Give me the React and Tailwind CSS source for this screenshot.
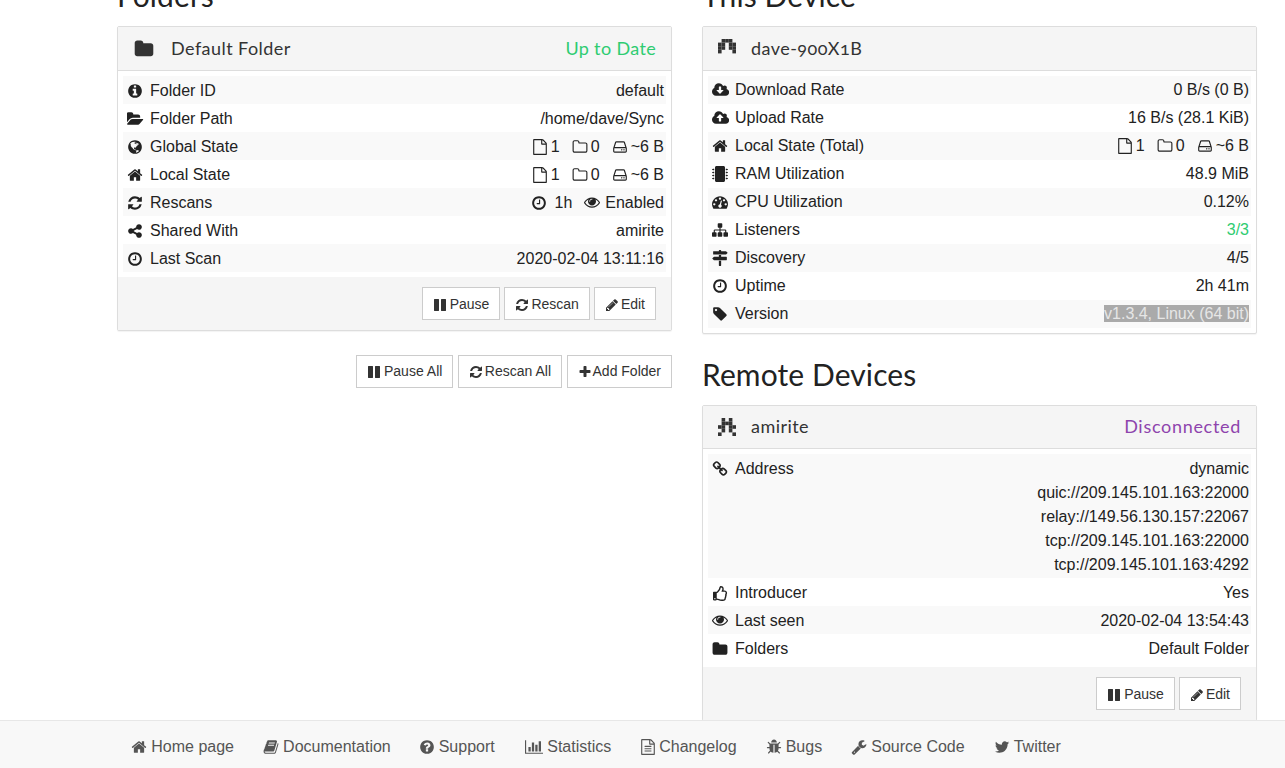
import React from "react";
import { FaRegThumbsUp, FaMicrochip } from "react-icons/fa";

const P = {
  home: "M1472 992v480q0 26-19 45t-45 19h-384v-384h-256v384h-384q-26 0-45-19t-19-45v-480q0-1 .5-3t.5-3l575-474 575 474q1 2 1 6zm223-69l-62 74q-8 9-21 11h-3q-13 0-21-7l-692-577-692 577q-12 8-24 7-13-2-21-11l-62-74q-8-10-7-23.500t11-21.500l719-599q32-26 76-26t76 26l244 204v-195q0-14 9-23t23-9h192q14 0 23 9t9 23v408l219 182q10 8 11 21.500t-7 23.500z",
  refresh: "M1639 1056q0 5-1 7-64 268-268 434.500t-478 166.500q-146 0-282.500-55t-243.500-157l-129 129q-19 19-45 19t-45-19-19-45v-448q0-26 19-45t45-19h448q26 0 45 19t19 45-19 45l-137 137q71 66 161 102t187 36q134 0 250-65t186-179q11-17 53-117 8-23 30-23h192q13 0 22.500 9.500t9.500 22.500zm25-800v448q0 26-19 45t-45 19h-448q-26 0-45-19t-19-45 19-45l138-138q-148-137-349-137-134 0-250 65t-186 179q-11 17-53 117-8 23-30 23h-199q-13 0-22.500-9.500t-9.500-22.500v-7q65-268 270-434.500t480-166.500q146 0 284 55.500t245 156.500l130-129q19-19 45-19t45 19 19 45z",
  clock: "M1024 544v448q0 14-9 23t-23 9h-320q-14 0-23-9t-9-23v-64q0-14 9-23t23-9h224v-352q0-14 9-23t23-9h64q14 0 23 9t9 23zm416 352q0-148-73-273t-198-198-273-73-273 73-198 198-73 273 73 273 198 198 273 73 273-73 198-198 73-273zm224 0q0 209-103 385.500t-279.500 279.500-385.500 103-385.500-103-279.500-279.500-103-385.500 103-385.500 279.500-279.500 385.500-103 385.500 103 279.500 279.500 103 385.500z",
  pencil: "M491 1536l91-91-235-235-91 91v107h128v128h107zm523-928q0-22-22-22-10 0-17 7l-542 542q-7 7-7 17 0 22 22 22 10 0 17-7l542-542q7-7 7-17zm-54-192l416 416-832 832h-416v-416zm683 96q0 53-37 90l-166 166-416-416 166-165q36-38 90-38 53 0 91 38l235 234q37 39 37 91z",
  dash: "M384 1152q0-53-37.500-90.500t-90.500-37.500-90.500 37.500-37.500 90.500 37.500 90.500 90.500 37.500 90.500-37.500 37.500-90.500zm192-448q0-53-37.500-90.500t-90.500-37.500-90.500 37.500-37.500 90.500 37.500 90.500 90.500 37.500 90.500-37.500 37.500-90.500zm428 481l101-382q6-26-7.500-48.500t-38.500-29.500-48 6.500-30 39.500l-101 382q-60 5-107 43.500t-63 98.500q-20 77 20 146t117 89 146-20 89-117q16-60-6-117t-72-91zm660-33q0-53-37.500-90.500t-90.500-37.500-90.500 37.500-37.500 90.500 37.500 90.500 90.500 37.500 90.500-37.500 37.500-90.500zm-640-640q0-53-37.500-90.500t-90.500-37.500-90.500 37.500-37.500 90.500 37.500 90.500 90.500 37.500 90.500-37.500 37.500-90.500zm448 192q0-53-37.500-90.500t-90.500-37.500-90.500 37.500-37.500 90.500 37.500 90.500 90.500 37.500 90.500-37.500 37.500-90.500zm320 448q0 261-141 483-19 29-54 29h-1402q-35 0-54-29-141-221-141-483 0-182 71-348t191-286 286-191 348-71 348 71 286 191 191 286 71 348z",
  folder: "M1728 608v704q0 92-66 158t-158 66h-1216q-92 0-158-66t-66-158v-960q0-92 66-158t158-66h320q92 0 158 66t66 158v32h672q92 0 158 66t66 158z",
  folderO: "M1600 1312v-704q0-40-28-68t-68-28h-704q-40 0-68-28t-28-68v-64q0-40-28-68t-68-28h-320q-40 0-68 28t-28 68v960q0 40 28 68t68 28h1216q40 0 68-28t28-68zm128-704v704q0 92-66 158t-158 66h-1216q-92 0-158-66t-66-158v-960q0-92 66-158t158-66h320q92 0 158 66t66 158v32h672q92 0 158 66t66 158z",
  fileO: "M1596 380q28 28 48 76t20 88v1152q0 40-28 68t-68 28h-1344q-40 0-68-28t-28-68v-1600q0-40 28-68t68-28h896q40 0 88 20t76 48zm-444-244v376h376q-10-29-22-41l-313-313q-12-12-41-22zm384 1528v-1024h-416q-40 0-68-28t-28-68v-416h-768v1536h1280z",
  info: "M1152 1376v-160q0-14-9-23t-23-9h-96v-512q0-14-9-23t-23-9h-320q-14 0-23 9t-9 23v160q0 14 9 23t23 9h96v320h-96q-14 0-23 9t-9 23v160q0 14 9 23t23 9h448q14 0 23-9t9-23zm-128-896v-160q0-14-9-23t-23-9h-192q-14 0-23 9t-9 23v160q0 14 9 23t23 9h192q14 0 23-9t9-23zm640 416q0 209-103 385.500t-279.500 279.500-385.500 103-385.500-103-279.500-279.500-103-385.500 103-385.500 279.500-279.500 385.500-103 385.500 103 279.500 279.500 103 385.500z",
  question: "M1024 1376v-192q0-14-9-23t-23-9h-192q-14 0-23 9t-9 23v192q0 14 9 23t23 9h192q14 0 23-9t9-23zm256-672q0-88-55.500-163t-138.500-116-170-41q-243 0-371 213-15 24 8 42l132 100q7 6 19 6 16 0 25-12 53-68 86-92 34-24 86-24 48 0 85.500 26t37.500 59q0 38-20 61t-68 45q-63 28-115.500 86.500t-52.500 125.500v36q0 14 9 23t23 9h192q14 0 23-9t9-23q0-19 21.500-49.500t54.500-49.500q32-18 49-28.500t46-35 44.500-48 28-60.500 12.500-81zm384 192q0 209-103 385.500t-279.500 279.500-385.500 103-385.500-103-279.500-279.500-103-385.500 103-385.500 279.500-279.500 385.500-103 385.500 103 279.500 279.500 103 385.500z",
  pause: "M1664 192v1408q0 26-19 45t-45 19h-512q-26 0-45-19t-19-45v-1408q0-26 19-45t45-19h512q26 0 45 19t19 45zm-896 0v1408q0 26-19 45t-45 19h-512q-26 0-45-19t-19-45v-1408q0-26 19-45t45-19h512q26 0 45 19t19 45z",
  plus: "M1600 736v192q0 40-28 68t-68 28h-416v416q0 40-28 68t-68 28h-192q-40 0-68-28t-28-68v-416h-416q-40 0-68-28t-28-68v-192q0-40 28-68t68-28h416v-416q0-40 28-68t68-28h192q40 0 68 28t28 68v416h416q40 0 68 28t28 68z",
  hdd: "M1168 1216q0 33-23.500 56.500t-56.500 23.500-56.500-23.500-23.500-56.500 23.500-56.500 56.500-23.500 56.500 23.500 23.500 56.500zm256 0q0 33-23.500 56.500t-56.500 23.500-56.500-23.500-23.500-56.500 23.500-56.500 56.500-23.500 56.500 23.500 23.500 56.500zm112 160v-320q0-13-9.500-22.500t-22.500-9.500h-1216q-13 0-22.500 9.500t-9.500 22.500v320q0 13 9.500 22.500t22.500 9.500h1216q13 0 22.500-9.500t9.500-22.500zm-1230-480h1180l-157-482q-4-13-16-21.500t-26-8.500h-782q-14 0-26 8.500t-16 21.500zm1358 160v320q0 66-47 113t-113 47h-1216q-66 0-113-47t-47-113v-320q0-25 16-75l197-606q17-53 63-86t101-33h782q55 0 101 33t63 86l197 606q16 50 16 75z",
  share: "M1344 1024q133 0 226.500 93.500t93.500 226.500-93.500 226.500-226.500 93.500-226.500-93.500-93.500-226.500q0-12 2-34l-360-180q-92 86-218 86-133 0-226.500-93.500t-93.500-226.500 93.500-226.500 226.500-93.500q126 0 218 86l360-180q-2-22-2-34 0-133 93.500-226.500t226.500-93.500 226.500 93.500 93.500 226.500-93.500 226.500-226.500 93.500q-126 0-218-86l-360 180q2 22 2 34t-2 34l360 180q92-86 218-86z",
  folderOpen: "M1815 952q0 31-31 66l-336 396q-43 51-120.500 86.500t-143.500 35.500h-1088q-34 0-60.500-13t-26.500-43q0-31 31-66l336-396q43-51 120.500-86.500t143.500-35.500h1088q34 0 60.500 13t26.500 43zm-343-344v160h-832q-94 0-197 47.500t-164 119.500l-337 396-5 6q0-4-.5-12.500t-.5-12.500v-960q0-92 66-158t158-66h320q92 0 158 66t66 158v32h544q92 0 158 66t66 158z",
  cloudDown: "M1280 928q0-14-9-23t-23-9h-224v-352q0-13-9.500-22.500t-22.500-9.500h-192q-13 0-22.500 9.500t-9.500 22.500v352h-224q-13 0-22.500 9.500t-9.500 22.500q0 14 9 23l352 352q9 9 23 9t23-9l351-351q10-12 10-24zm640 224q0 159-112.500 271.500t-271.500 112.500h-1088q-185 0-316.500-131.500t-131.500-316.500q0-130 70-240t188-165q-2-30-2-43 0-212 150-362t362-150q156 0 285.500 87t188.500 231q71-62 166-62 106 0 181 75t75 181q0 76-41 138 130 31 213.500 135.500t83.500 238.500z",
  cloudUp: "M1280 864q0-14-9-23l-352-352q-9-9-23-9t-23 9l-351 351q-10 12-10 24 0 14 9 23t23 9h224v352q0 13 9.500 22.500t22.500 9.500h192q13 0 22.500-9.500t9.500-22.500v-352h224q13 0 22.500-9.500t9.500-22.500zm640 288q0 159-112.500 271.500t-271.500 112.500h-1088q-185 0-316.500-131.500t-131.500-316.500q0-130 70-240t188-165q-2-30-2-43 0-212 150-362t362-150q156 0 285.500 87t188.500 231q71-62 166-62 106 0 181 75t75 181q0 76-41 138 130 31 213.500 135.500t83.500 238.500z",
  sitemap: "M1792 1248v320q0 40-28 68t-68 28h-320q-40 0-68-28t-28-68v-320q0-40 28-68t68-28h96v-192h-512v192h96q40 0 68 28t28 68v320q0 40-28 68t-68 28h-320q-40 0-68-28t-28-68v-320q0-40 28-68t68-28h96v-192h-512v192h96q40 0 68 28t28 68v320q0 40-28 68t-68 28h-320q-40 0-68-28t-28-68v-320q0-40 28-68t68-28h96v-192q0-52 38-90t90-38h512v-192h-96q-40 0-68-28t-28-68v-320q0-40 28-68t68-28h320q40 0 68 28t28 68v320q0 40-28 68t-68 28h-96v192h512q52 0 90 38t38 90v192h96q40 0 68 28t28 68z",
  tag: "M576 448q0-53-37.500-90.500t-90.500-37.500-90.500 37.500-37.500 90.500 37.500 90.500 90.500 37.500 90.500-37.500 37.500-90.500zm1067 576q0 53-37 90l-491 492q-39 37-91 37-53 0-90-37l-715-716q-38-37-64.500-101t-26.500-117v-416q0-52 38-90t90-38h416q53 0 117 26.500t102 64.500l715 714q37 39 37 91z",
  link: "M1520 1216q0-40-28-68l-208-208q-28-28-68-28-42 0-72 32 3 3 19 18.500t21.500 21.500 15 19 13 25.500 3.500 27.500q0 40-28 68t-68 28q-15 0-27.500-3.500t-25.500-13-19-15-21.500-21.500-18.500-19q-33 31-33 73 0 40 28 68l206 207q27 27 68 27 40 0 68-26l147-146q28-28 28-67zm-703-705q0-40-28-68l-206-207q-28-28-68-28-39 0-68 27l-147 146q-28 28-28 67 0 40 28 68l208 208q27 27 68 27 42 0 72-31-3-3-19-18.500t-21.500-21.500-15-19-13-25.500-3.500-27.500q0-40 28-68t68-28q15 0 27.500 3.500t25.500 13 19 15 21.500 21.500 18.500 19q33-31 33-73zm895 705q0 120-85 203l-147 146q-83 83-203 83-121 0-204-85l-206-207q-83-83-83-203 0-123 88-209l-88-88q-86 88-208 88-120 0-204-84l-208-208q-84-84-84-204t85-203l147-146q83-83 203-83 121 0 204 85l206 207q83 83 83 203 0 123-88 209l88 88q86-88 208-88 120 0 204 84l208 208q84 84 84 204z",
  eye: "M1664 960q-152-236-381-353 61 104 61 225 0 185-131.500 316.500t-316.500 131.500-316.500-131.500-131.500-316.500q0-121 61-225-229 117-381 353 133 205 333.500 326.500t434.500 121.500 434.500-121.500 333.500-326.500zm-720-384q0-20-14-34t-34-14q-125 0-214.500 89.500t-89.500 214.500q0 20 14 34t34 14 34-14 14-34q0-86 61-147t147-61q20 0 34-14t14-34zm848 384q0 34-20 69-140 230-376.500 368.500t-499.500 138.500-499.500-139-376.500-368q-20-35-20-69t20-69q140-229 376.500-368t499.500-139 499.500 139 376.500 368q20 35 20 69z",
  signs: "M1745 297q10 10 10 23t-10 23l-141 141q-28 28-68 28h-1344q-26 0-45-19t-19-45v-256q0-26 19-45t45-19h576v-64q0-26 19-45t45-19h128q26 0 45 19t19 45v64h512q40 0 68 28zm-977 907h256v512q0 26-19 45t-45 19h-128q-26 0-45-19t-19-45v-512zm832-448q26 0 45 19t19 45v256q0 26-19 45t-45 19h-1344q-40 0-68-28l-141-141q-10-10-10-23t10-23l141-141q28-28 68-28h512v-192h256v192h576z",
  book: "M1703 478q40 57 18 129l-275 906q-19 64-76.500 107.500t-122.500 43.500h-923q-77 0-148.500-53.500t-99.500-131.500q-24-67-2-127 0-4 3-27t4-37q1-8-3-21.500t-3-19.500q2-11 8-21t16.500-23.500 16.500-23.500q23-38 45-91.500t30-91.500q3-10 .5-30t-.5-28q3-11 17-28t17-23q21-36 42-92t25-90q1-9-2.500-32t.5-28q4-13 22-30.500t22-22.500q19-26 42.500-84.500t27.500-96.500q1-8-3-25.500t-2-26.500q2-8 9-18t18-23 17-21q8-12 16.500-30.500t15-35 16-36 19.500-32 26.500-23.500 36-11.500 47.500 5.500l-1 3q38-9 51-9h761q74 0 114 56t18 130l-274 906q-36 119-71.500 153.500t-128.500 34.500h-869q-27 0-38 15-11 16-1 43 24 70 144 70h923q29 0 56-15.500t35-41.500l300-987q7-22 5-57 38 15 59 43zm-1064 2q-4 13 2 22.500t20 9.500h608q13 0 25.500-9.500t16.500-22.500l21-64q4-13-2-22.500t-20-9.500h-608q-13 0-25.500 9.500t-16.500 22.500zm-83 256q-4 13 2 22.500t20 9.500h608q13 0 25.500-9.500t16.500-22.500l21-64q4-13-2-22.500t-20-9.500h-608q-13 0-25.500 9.500t-16.500 22.500z",
  chart: "M640 896v512h-256v-512h256zm384-512v1024h-256v-1024h256zm1024 1152v128h-2048v-1536h128v1408h1920zm-640-896v768h-256v-768h256zm384-384v1152h-256v-1152h256z",
  fileText: "M1596 380q28 28 48 76t20 88v1152q0 40-28 68t-68 28h-1344q-40 0-68-28t-28-68v-1600q0-40 28-68t68-28h896q40 0 88 20t76 48zm-444-244v376h376q-10-29-22-41l-313-313q-12-12-41-22zm384 1528v-1024h-416q-40 0-68-28t-28-68v-416h-768v1536h1280zm-1024-864q0-14 9-23t23-9h704q14 0 23 9t9 23v64q0 14-9 23t-23 9h-704q-14 0-23-9t-9-23v-64zm736 224q14 0 23 9t9 23v64q0 14-9 23t-23 9h-704q-14 0-23-9t-9-23v-64q0-14 9-23t23-9h704zm0 256q14 0 23 9t9 23v64q0 14-9 23t-23 9h-704q-14 0-23-9t-9-23v-64q0-14 9-23t23-9h704z",
  bug: "M1696 960q0 26-19 45t-45 19h-224q0 171-67 290l208 209q19 19 19 45t-19 45q-18 19-45 19t-45-19l-198-197q-5 5-15 13t-42 28.500-65 36.500-82 29-97 13v-896h-128v896q-51 0-101.500-13.500t-87-33-66-39-43.500-32.500l-15-14-183 207q-20 21-48 21-24 0-43-16-19-18-20.500-44.500t15.500-46.500l202-227q-58-114-58-274h-224q-26 0-45-19t-19-45 19-45 45-19h224v-294l-173-173q-19-19-19-45t19-45 45-19 45 19l173 173h844l173-173q19-19 45-19t45 19 19 45-19 45l-173 173v294h224q26 0 45 19t19 45zm-480-576h-640q0-133 93.500-226.500t226.500-93.500 226.500 93.500 93.500 226.500z",
  wrench: "M448 1472q0-26-19-45t-45-19-45 19-19 45 19 45 45 19 45-19 19-45zm644-420l-682 682q-37 37-90 37-52 0-91-37l-106-108q-38-36-38-90 0-53 38-91l681-681q39 98 114.500 173.500t173.500 114.500zm634-435q0 39-23 106-47 134-164.500 217.500t-258.500 83.500q-185 0-316.500-131.500t-131.500-316.500 131.500-316.500 316.500-131.500q58 0 121.500 16.500t107.500 46.500q16 11 16 28t-16 28l-293 169v224l193 107q5-3 79-48.500t135.500-81 70.500-35.500q15 0 23.500 10t8.500 25z",
  twitter: "M1684 408q-67 98-162 167 1 14 1 42 0 130-38 259.500t-115.500 248.500-184.500 210.500-258 146-323 54.500q-271 0-496-145 35 4 78 4 225 0 401-138-105-2-188-64.500t-114-159.500q33 5 61 5 43 0 85-11-112-23-185.500-111.500t-73.500-205.500v-4q68 38 146 41-66-44-105-115t-39-154q0-88 44-163 121 149 294.500 238.500t371.500 99.500q-8-38-8-74 0-134 94.500-228.500t228.500-94.500q140 0 236 102 109-21 205-78-37 115-142 178 104-11 208-56z",
  globe: "M896 128q209 0 385.500 103t279.500 279.500 103 385.500-103 385.500-279.500 279.500-385.500 103-385.500-103-279.500-279.500-103-385.500 103-385.500 279.500-279.500 385.500-103zm274 521q-2 1-9.500 9.500t-13.500 9.500q2 0 4.500-5t5-11 3.500-7q6-7 22-15 14-6 52-12 34-8 51 11-2-2 9.500-13t14.500-12q3-2 15-4.500t15-7.500l2-22q-12 1-17.500-7t-6.500-21q0 2-6 8 0-7-4.500-8t-11.500 1-9 1q-10-3-15-7.500t-8-16.500-4-15q-2-5-9.500-10.500t-9.500-10.500q-1-2-2.500-5.500t-3-6.500-4-5.500-5.500-2.500-7 5-7.500 10-4.500 5q-3-2-6-1.500t-4.500 1-4.500 3-5 3.500q-3 2-8.500 3t-8.500 2q15-5-1-11-10-4-16-3 9-4 7.500-12t-8.500-14h5q-1-4-8.500-8.500t-17.500-8.500-13-6q-8-5-34-9.500t-33-.5q-5 6-4.500 10.500t4 14 3.500 12.500q1 6-5.500 13t-6.500 12q0 7 14 15.500t10 21.500q-3 8-16 16t-16 12q-5 8-1.500 18.500t10.500 16.500q2 2 1.500 4t-3.500 4.500-5.500 4-6.500 3.500l-3 2q-11 5-20.500-6t-13.500-26q-7-25-16-30-23-8-29 1-5-13-41-26-25-9-58-4 6-1 0-15-7-15-19-12 3-6 4-17.500t1-13.500q3-13 12-23 1-1 7-8.500t9.500-13.500.5-6q35 4 50-11 5-5 11.500-17t10.500-17q9-6 14-5.500t14.500 5.500 14.500 5q14 1 15.500-11t-7.500-20q12 1 3-17-4-7-8-9-12-4-27 5-8 4 2 8-1-1-9.500 10.500t-16.500 17.500-16-5q-1-1-5.500-13.500t-9.500-13.500q-8 0-16 15 3-8-11-15t-24-8q19-12-8-27-7-4-20.500-5t-19.500 4q-5 7-5.500 11.500t5 8 10.500 5.500 11.500 4 8.500 3q14 10 8 14-2 1-8.500 3.500t-11.500 4.500-6 4q-3 4 0 14t-2 14q-5-5-9-17.500t-7-16.500q7 9-25 6l-10-1q-4 0-16 2t-20.500 1-13.500-8q-4-8 0-20 1-4 4-2-4-3-11-9.500t-10-8.500q-46 15-94 41 6 1 12-1 5-2 13-6.500t10-5.500q34-14 42-7l5-5q14 16 20 25-7-4-30-1-20 6-22 12 7 12 5 18-4-3-11.500-10t-14.500-11-15-5q-16 0-22 1-146 80-235 222 7 7 12 8 4 1 5 9t2.500 11 11.500-3q9 8 3 19 1-1 44 27 19 17 21 21 3 11-10 18-1-2-9-9t-9-4q-3 5 .5 18.500t10.500 12.500q-7 0-9.500 16t-2.500 35.500-1 23.500l2 1q-3 12 5.500 34.500t21.500 19.500q-13 3 20 43 6 8 8 9 3 2 12 7.500t15 10 10 10.500q4 5 10 22.500t14 23.500q-2 6 9.500 20t10.500 23q-1 0-2.500 1t-2.500 1q3 7 15.500 14t15.500 13q1 3 2 10t3 11 8 2q2-20-24-62-15-25-17-29-3-5-5.500-15.500t-4.500-14.500q2 0 6 1.500t8.500 3.500 7.500 4 2 3q-3 7 2 17.500t12 18.500 17 19 12 13q6 6 14 19.500t0 13.500q9 0 20 10.500t17 19.500q5 8 8 26t5 24q2 7 8.500 13.500t12.500 9.500l16 8 13 7q5 2 18.500 10.500t21.500 11.500q10 4 16 4t14.500-2.500 13.500-3.500q15-2 29 15t21 21q36 19 55 11-2 1 .5 7.500t8 15.500 9 14.500 5.500 8.500q5 6 18 15t18 15q6-4 7-9-3 8 7 20t18 10q14-3 14-32-31 15-49-18 0-1-2.500-5.500t-4-8.500-2.500-8.500 0-7.500 5-3q9 0 10-3.500t-2-12.500-4-13q-1-8-11-20t-12-15q-5 9-16 8t-16-9q0 1-1.500 5.500t-1.500 6.500q-13 0-15-1 1-3 2.500-17.500t3.500-22.500q1-4 5.500-12t7.500-14.500 4-12.500-4.500-9.500-17.500-2.500q-19 1-26 20-1 3-3 10.500t-5 11.500-9 7q-7 3-24 2t-24-5q-13-8-22.500-29t-9.500-37q0-10 2.500-26.500t3-25-5.500-24.500q3-2 9-9.500t10-10.500q2-1 4.500-1.500t4.500 0 4-1.500 3-6q-1-1-4-3-3-3-4-3 7 3 28.500-1.500t27.500 1.500q15 11 22-2 0-1-2.500-9.500t-.5-13.500q5 27 29 9 3 3 15.500 5t17.500 5q3 2 7 5.500t5.500 4.500 5-.5 8.500-6.500q10 14 12 24 11 40 19 44 7 3 11 2t4.500-9.500 0-14-1.500-12.500l-1-8v-18l-1-8q-15-3-18.500-12t1.500-18.500 15-18.500q1-1 8-3.500t15.500-6.500 12.500-8q21-19 15-35 7 0 11-9-1 0-5-3t-7.500-5-4.500-2q9-5 2-16 5-3 7.500-11t7.500-10q9 12 21 2 8-8 1-16 5-7 20.500-10.500t18.500-9.500q7 2 8-2t1-12 3-12q4-5 15-9t13-5l17-11q3-4 0-4 18 2 31-11 10-11-6-20 3-6-3-9.500t-15-5.500q3-1 11.500-.5t10.500-1.500q15-10-7-16-17-5-43 12zm-163 877q206-36 351-189-3-3-12.500-4.500t-12.500-3.500q-18-7-24-8 1-7-2.500-13t-8-9-12.500-8-11-7q-2-2-7-6t-7-5.500-7.500-4.500-8.500-2-10 1l-3 1q-3 1-5.500 2.500t-5.500 3-4 3 0 2.500q-21-17-36-22-5-1-11-5.500t-10.500-7-10-1.500-11.500 7q-5 5-6 15t-2 13q-7-5 0-17.500t2-18.500q-3-6-10.500-4.500t-12 4.500-11.500 8.500-9 6.500-8.500 5.500-8.500 7.500q-3 4-6 12t-5 11q-2-4-11.500-6.500t-9.500-5.500q2 10 4 35t5 38q7 31-12 48-27 25-29 40-4 22 12 26 0 7-8 20.500t-7 21.500q0 6 2 16z",
};

const Fa = ({ d, vb = 1792, className = "" }) => (
  <svg viewBox={`0 0 ${vb} 1792`} width={`${vb / 1792}em`} height="1em" fill="currentColor" className={"shrink-0 " + className}><path d={d} /></svg>
);

const Identicon = ({ cells, className = "" }) => (
  <svg width="18" height="18" viewBox="0 0 5 5" className={"shrink-0 " + className} fill="#333">
    {cells.map((row, y) => [...row].map((c, x) => c === "X" ? <rect key={x + "-" + y} x={x} y={y} width="1" height="1" /> : null))}
  </svg>
);

const Row = ({ icon, label, children, multi }) => (
  <div className={"flex justify-between px-[2px] odd:bg-[#f9f9f9] " + (multi ? "pt-[2px] pb-[2px]" : "h-[28px] items-center")}>
    <span className="flex leading-[24px]">
      <span className="w-[20.5px] h-[24px] flex items-center justify-center">{icon}</span>
      <span className="ml-[4.5px]">{label}</span>
    </span>
    <span className="text-right leading-[24px]">{children}</span>
  </div>
);

const Stats = () => (
  <span className="flex items-center justify-end">
    <Fa d={P.fileO} /><span className="ml-[3px]">1</span>
    <span className="ml-[12px]"><Fa d={P.folderO} /></span><span className="ml-[3px]">0</span>
    <span className="ml-[12px]"><Fa d={P.hdd} /></span><span className="ml-[3px]">~6 B</span>
  </span>
);

const Btn = ({ icon, children, gap = "gap-[2px]" }) => (
  <button className={"h-[33px] px-[10px] flex items-center bg-white border border-[#ccc] text-[14px] text-[#333] " + gap}>
    {icon}<span>{children}</span>
  </button>
);

const Panel = ({ identicon, title, titleClass = "", status, statusClass, rows, rowsClass = "", headerClass = "h-[44px]", footer }) => (
  <section className="border border-[#ddd] rounded-[2px] bg-white shadow-[0_1px_1px_rgba(0,0,0,0.05)]">
    <header className={headerClass + " bg-[#f5f5f5] border-b border-[#ddd] flex items-center justify-between px-[15px] text-[18px] text-[#333] font-['Lato',sans-serif] tracking-[0.45px]"}>
      <span className="flex items-center gap-[15px]">{identicon}<span className={titleClass}>{title}</span></span>
      {status && <span className={statusClass}>{status}</span>}
    </header>
    <div className={"p-[5px] " + rowsClass}>{rows}</div>
    {footer && <div className="h-[53px] bg-[#f5f5f5] flex items-start justify-end gap-[4px] pt-[10px] pr-[15px] [&>button]:pt-[2px]">{footer}</div>}
  </section>
);

const H2 = ({ children }) => (
  <h2 className="h-[33px] mb-[13px] text-[30px] leading-[31px] text-[#222] font-['Lato',sans-serif] tracking-[0.1px]">{children}</h2>
);

const links = [
  [P.home, 1792, "w-[14.86px]", "Home page"],
  [P.book, 1792, "w-[14.86px]", "Documentation"],
  [P.question, 1792, "w-[13.7px]", "Support"],
  [P.chart, 2048, "w-[18.3px]", "Statistics"],
  [P.fileText, 1792, "w-[13.7px]", "Changelog"],
  [P.bug, 1792, "w-[14.86px]", "Bugs"],
  [P.wrench, 1792, "w-[14.86px]", "Source Code"],
  [P.twitter, 1792, "w-[14.86px]", "Twitter"],
];

export default function App() {
  return (
    <div className="h-[768px] flex flex-col overflow-hidden bg-white text-[16px] text-[#222] font-['Liberation_Sans',Arial,sans-serif]">
      <main className="flex-1 min-h-0 overflow-hidden">
        <div className="grid grid-cols-[555px_555px] gap-[30px] pl-[117px] mt-[-20px]">
          <div>
            <H2>Folders</H2>
            <Panel
              identicon={<span className="w-[23px] pr-[2px] text-[20px] flex justify-end"><Fa d={P.folder} /></span>}
              title="Default Folder" status="Up to Date" statusClass="text-[#2ecc71] tracking-[0.35px]"
              rowsClass="[&>div]:pt-[2px]"
              rows={<>
                <Row icon={<Fa d={P.info} />} label="Folder ID">default</Row>
                <Row icon={<Fa d={P.folderOpen} vb={1920} />} label="Folder Path">/home/dave/Sync</Row>
                <Row icon={<Fa d={P.globe} />} label="Global State"><Stats /></Row>
                <Row icon={<Fa d={P.home} />} label="Local State"><Stats /></Row>
                <Row icon={<Fa d={P.refresh} />} label="Rescans">
                  <span className="flex items-center justify-end"><Fa d={P.clock} /><span className="ml-[7px]">1h</span><span className="ml-[12px]"><Fa d={P.eye} className="-translate-y-[1px]" /></span><span className="ml-[5px]">Enabled</span></span>
                </Row>
                <Row icon={<Fa d={P.share} />} label="Shared With">amirite</Row>
                <Row icon={<Fa d={P.clock} />} label="Last Scan">2020-02-04 13:11:16</Row>
              </>}
              footer={<>
                <Btn gap="gap-[3px]" icon={<Fa d={P.pause} />}>Pause</Btn>
                <Btn icon={<Fa d={P.refresh} />}>Rescan</Btn>
                <Btn icon={<Fa d={P.pencil} />}>Edit</Btn>
              </>}
            />
            <div className="mt-[24px] flex justify-end gap-[4.5px]">
              <Btn gap="gap-[3px]" icon={<Fa d={P.pause} />}>Pause All</Btn>
              <Btn icon={<Fa d={P.refresh} />}>Rescan All</Btn>
              <Btn gap="gap-[1px]" icon={<Fa d={P.plus} />}>Add Folder</Btn>
            </div>
          </div>
          <div>
            <H2>This Device</H2>
            <Panel
              identicon={<Identicon className="-translate-y-[1px]" cells={[".XXX.", "XX.XX", "XX.XX", "X...X", "....."]} />}
              title="dave-900X1B" titleClass="oldstyle-nums"
              rows={<>
                <Row icon={<Fa d={P.cloudDown} vb={1920} />} label="Download Rate">0 B/s (0 B)</Row>
                <Row icon={<Fa d={P.cloudUp} vb={1920} />} label="Upload Rate">16 B/s (28.1 KiB)</Row>
                <Row icon={<Fa d={P.home} />} label="Local State (Total)"><Stats /></Row>
                <Row icon={<FaMicrochip className="text-[16px]" />} label="RAM Utilization">48.9 MiB</Row>
                <Row icon={<Fa d={P.dash} />} label="CPU Utilization">0.12%</Row>
                <Row icon={<Fa d={P.sitemap} />} label="Listeners"><span className="text-[#2ecc71]">3/3</span></Row>
                <Row icon={<Fa d={P.signs} />} label="Discovery">4/5</Row>
                <Row icon={<Fa d={P.clock} />} label="Uptime">2h 41m</Row>
                <Row icon={<Fa d={P.tag} />} label="Version"><span className="bg-[#aaa] text-[#e6e6e6] inline-block leading-[17px]">v1.3.4, Linux (64 bit)</span></Row>
              </>}
            />
            <div className="h-[25px]" />
            <H2>Remote Devices</H2>
            <Panel
              identicon={<Identicon className="translate-y-[1px]" cells={[".X.X.", ".XXX.", "XX.XX", ".X.X.", "X...X"]} />}
              title="amirite" status="Disconnected" statusClass="text-[#8e44ad] tracking-[0.7px]"
              headerClass="h-[43px] pb-[2px]"
              rowsClass="[&>div]:pt-[2px] [&>div:first-child]:pt-[3px] [&>div:first-child]:pb-[1px]"
              rows={<>
                <Row multi icon={<Fa d={P.link} />} label="Address">
                  <div>dynamic</div>
                  <div>quic://209.145.101.163:22000</div>
                  <div>relay://149.56.130.157:22067</div>
                  <div>tcp://209.145.101.163:22000</div>
                  <div>tcp://209.145.101.163:4292</div>
                </Row>
                <Row icon={<FaRegThumbsUp className="text-[15px]" />} label="Introducer">Yes</Row>
                <Row icon={<Fa d={P.eye} className="-translate-y-[1px]" />} label="Last seen">2020-02-04 13:54:43</Row>
                <Row icon={<Fa d={P.folder} />} label="Folders">Default Folder</Row>
              </>}
              footer={<>
                <Btn gap="gap-[3px]" icon={<Fa d={P.pause} />}>Pause</Btn>
                <Btn icon={<Fa d={P.pencil} />}>Edit</Btn>
              </>}
            />
          </div>
        </div>
      </main>
      <footer className="h-[48px] shrink-0 bg-[#f8f8f8] border-t border-[#e7e7e7] flex items-center gap-[29.8px] pt-[4px] pl-[132px] text-[#555]">
        {links.map(([d, vb, w, text]) => (
          <span key={text} className="flex items-center gap-[4.45px]">
            <span className={w + " flex justify-center"}><Fa d={d} vb={vb} /></span>{text}
          </span>
        ))}
      </footer>
    </div>
  );
}
